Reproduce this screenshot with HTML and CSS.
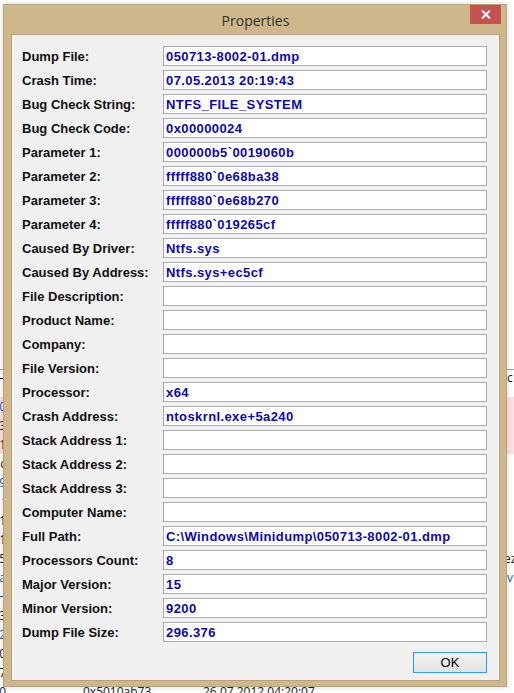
FILE: index.html
```html
<!DOCTYPE html>
<html lang="en">
<head>
    <meta charset="UTF-8">
    <meta name="viewport" content="width=device-width, initial-scale=1.0">
    <title>Properties</title>
    <link rel="stylesheet" href="styles.css">
</head>
<body>
    <!-- crash list of the main window, mostly hidden behind the dialog -->
    <div class="crash-list">
        <div class="list-header"></div>
        <div class="list-row first"><span class="c1">—</span><span class="c4">ic</span></div>
        <div class="list-row sel"><span class="c1 blue">0</span><span class="c4"></span></div>
        <div class="list-row sel"><span class="c1">3</span><span class="c4"></span></div>
        <div class="list-row sel"><span class="c1">1</span><span class="c4"></span></div>
        <div class="list-row"><span class="c1">c</span><span class="c4"></span></div>
        <div class="list-row"><span class="c1 blue">9</span><span class="c4"></span></div>
        <div class="list-row"><span class="c1 blue">f</span><span class="c4"></span></div>
        <div class="list-row"><span class="c1">1</span><span class="c4"></span></div>
        <div class="list-row"><span class="c1">1</span><span class="c4"></span></div>
        <div class="list-row"><span class="c1">5</span><span class="c4">ez</span></div>
        <div class="list-row"><span class="c1 blue">a</span><span class="c4 blue">iv</span></div>
        <div class="list-row"><span class="c1 blue">H</span><span class="c4"></span></div>
        <div class="list-row"><span class="c1">3</span><span class="c4"></span></div>
        <div class="list-row"><span class="c1 blue">2</span><span class="c4"></span></div>
        <div class="list-row"><span class="c1">0</span><span class="c4"></span></div>
        <div class="list-row"><span class="c1">7</span><span class="c4"></span></div>
        <div class="list-row"><span class="c1">000</span><span class="c2">0x5010ab73</span><span class="c3">26.07.2012 04:20:07</span><span class="c4"></span></div>
    </div>

    <div class="dialog">
        <div class="title-bar">
            <span class="title">Properties</span>
            <button class="close-btn" type="button" aria-label="Close">
                <svg width="10" height="9" viewBox="0 0 10 9">
                    <path d="M1 0.5 L9 8.5 M9 0.5 L1 8.5" stroke="#fff" stroke-width="2" fill="none"/>
                </svg>
            </button>
        </div>
        <div class="client">
            <form class="fields">
                <label>Dump File:</label><input type="text" readonly value="050713-8002-01.dmp">
                <label>Crash Time:</label><input type="text" readonly value="07.05.2013 20:19:43">
                <label>Bug Check String:</label><input type="text" readonly value="NTFS_FILE_SYSTEM">
                <label>Bug Check Code:</label><input type="text" readonly value="0x00000024">
                <label>Parameter 1:</label><input type="text" readonly value="000000b5`0019060b">
                <label>Parameter 2:</label><input type="text" readonly value="fffff880`0e68ba38">
                <label>Parameter 3:</label><input type="text" readonly value="fffff880`0e68b270">
                <label>Parameter 4:</label><input type="text" readonly value="fffff880`019265cf">
                <label>Caused By Driver:</label><input type="text" readonly value="Ntfs.sys">
                <label>Caused By Address:</label><input type="text" readonly value="Ntfs.sys+ec5cf">
                <label>File Description:</label><input type="text" readonly value="">
                <label>Product Name:</label><input type="text" readonly value="">
                <label>Company:</label><input type="text" readonly value="">
                <label>File Version:</label><input type="text" readonly value="">
                <label>Processor:</label><input type="text" readonly value="x64">
                <label>Crash Address:</label><input type="text" readonly value="ntoskrnl.exe+5a240">
                <label>Stack Address 1:</label><input type="text" readonly value="">
                <label>Stack Address 2:</label><input type="text" readonly value="">
                <label>Stack Address 3:</label><input type="text" readonly value="">
                <label>Computer Name:</label><input type="text" readonly value="">
                <label>Full Path:</label><input type="text" readonly value="C:\Windows\Minidump\050713-8002-01.dmp">
                <label>Processors Count:</label><input type="text" readonly value="8">
                <label>Major Version:</label><input type="text" readonly value="15">
                <label>Minor Version:</label><input type="text" readonly value="9200">
                <label>Dump File Size:</label><input type="text" readonly value="296.376">
            </form>
            <div class="buttons">
                <button class="ok-btn" type="button">OK</button>
            </div>
        </div>
    </div>
</body>
</html>
```

FILE: styles.css
```css
html, body {
    margin: 0;
    padding: 0;
    height: 693px;
    overflow: hidden;
}

body {
    background-color: #fff;
    font-family: "Liberation Sans", Arial, sans-serif;
    position: relative;
}

/* main window list behind the dialog */
.crash-list {
    padding-top: 351px;
    font-family: "Open Sans", sans-serif;
    font-size: 12px;
    color: #222;
}

.list-header {
    height: 19px;
    border-bottom: 1px solid #a0a0a0;
    box-sizing: border-box;
}

.list-row {
    display: flex;
    height: 19px;
    line-height: 19px;
    white-space: nowrap;
}

.list-row.first {
    height: 27px;
    line-height: 16px;
}

.list-row.sel {
    background-color: #fde0e3;
}

.list-row .c1 {
    width: 6px;
    display: flex;
    justify-content: flex-end;
}

.list-row .c2 {
    margin-left: 77px;
    width: 120px;
}

.list-row .c3 {
    width: 300px;
}

.list-row .c4 {
    margin-left: auto;
    width: 10px;
}

.list-row .blue {
    color: #1560c8;
}

/* dialog window */
.dialog {
    position: absolute;
    left: 3px;
    top: 4px;
    width: 504px;
    height: 683px;
    box-sizing: border-box;
    background-color: #ceb88b;
    border: 1px solid #b9a47a;
    padding: 0 6px 5px 7px;
    display: flex;
    flex-direction: column;
    box-shadow: 0 0 6px rgba(0, 0, 0, 0.15);
}

.title-bar {
    height: 29px;
    display: flex;
    align-items: center;
    justify-content: center;
    flex-shrink: 0;
}

.title {
    font-family: "Open Sans", sans-serif;
    font-size: 14px;
    color: #2e2e2e;
    padding-top: 1px;
}

.close-btn {
    position: absolute;
    top: 0;
    right: 5px;
    width: 31px;
    height: 19px;
    border: none;
    padding: 0;
    background-color: #c75050;
    display: flex;
    align-items: center;
    justify-content: center;
}

.client {
    flex: 1;
    background-color: #f0f0f0;
    border: 1px solid #b5a17a;
    padding: 11px 12px 0 10px;
}

.fields {
    display: grid;
    grid-template-columns: 141px 324px;
    row-gap: 4px;
    margin: 0;
}

.fields label {
    align-self: center;
    font-size: 13px;
    font-weight: bold;
    color: #111;
}

.fields input {
    height: 20px;
    box-sizing: border-box;
    border: 1px solid #abadb3;
    background-color: #fff;
    padding: 0 2px;
    margin: 0;
    font-family: "Liberation Sans", Arial, sans-serif;
    font-size: 13px;
    font-weight: bold;
    letter-spacing: 0.4px;
    color: #0a0ab4;
    outline: none;
}

.buttons {
    display: flex;
    justify-content: flex-end;
    margin-top: 10px;
    width: 465px;
}

.ok-btn {
    width: 74px;
    height: 21px;
    border: 1px solid #3399ff;
    background: linear-gradient(#f2f2f2, #e3e3e3);
    font-family: "Liberation Sans", Arial, sans-serif;
    font-size: 13px;
    color: #000;
    padding: 0;
}
```
